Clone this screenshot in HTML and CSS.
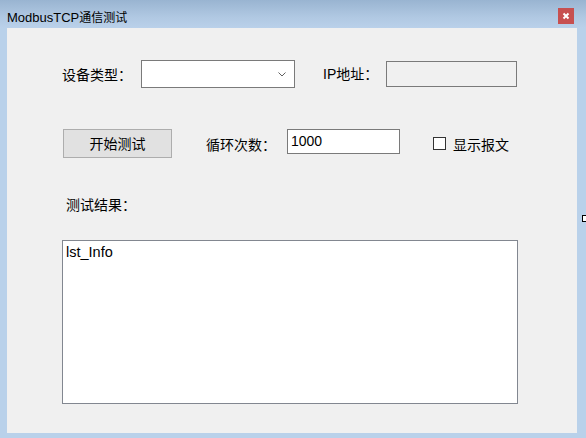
FILE: index.html
```html
<!DOCTYPE html>
<html lang="zh-CN">
<head>
<meta charset="utf-8">
<title>ModbusTCP通信测试</title>
<link rel="stylesheet" href="styles.css">
</head>
<body>
<div class="window">
  <div class="titlebar">
    <span class="title">ModbusTCP<span class="title-cjk">通信测试</span></span>
    <div class="close">
      <svg width="16" height="16" viewBox="0 0 16 16"><path d="M5.5 5.5 L10.5 10.5 M10.5 5.5 L5.5 10.5" stroke="#fff" stroke-width="2" fill="none"/></svg>
    </div>
  </div>
  <div class="frame">
    <div class="client">
      <div class="row row1">
        <span class="label label-type">设备类型：</span>
        <div class="combo">
          <svg class="chev" width="8" height="5" viewBox="0 0 8 5"><path d="M0.5 0.5 L4 4 L7.5 0.5" stroke="#606060" stroke-width="1" fill="none"/></svg>
        </div>
        <span class="label label-ip">IP地址：</span>
        <div class="textbox ipbox"></div>
      </div>
      <div class="row row2">
        <div class="button">开始测试</div>
        <span class="label label-loop">循环次数：</span>
        <div class="textbox loopbox">1000</div>
        <div class="check"></div>
        <span class="label check-label">显示报文</span>
      </div>
      <div class="label result-label">测试结果：</div>
      <div class="listbox">lst_Info</div>
    </div>
  </div>
  <div class="edge-mark"></div>
</div>
</body>
</html>
```
FILE: styles.css
```css
html, body {
  margin: 0;
  padding: 0;
}
body {
  width: 586px;
  height: 438px;
  overflow: hidden;
  font-family: "Noto Sans CJK SC", "Liberation Sans", sans-serif;
  color: #000;
}
.window {
  position: relative;
  width: 586px;
  height: 438px;
  display: flex;
  flex-direction: column;
  background: #b9d1ea;
}
.titlebar {
  height: 28px;
  flex: none;
  display: flex;
  align-items: flex-start;
  background: linear-gradient(to bottom, #99b4d1 0%, #b0c8e2 60%, #bad1ea 100%);
}
.title {
  margin-left: 7px;
  padding-top: 8px;
  font-family: "Liberation Sans", "Noto Sans CJK SC", sans-serif;
  font-size: 13px;
  line-height: 17px;
  color: #000;
}
.title-cjk {
  font-family: "Noto Sans CJK SC", sans-serif;
  font-size: 12px;
}
.close {
  margin-left: auto;
  margin-top: 8px;
  margin-right: 12px;
  width: 16px;
  height: 16px;
  background: #c75050;
}
.close svg { display: block; }
.frame {
  flex: 1;
  padding: 0 9px 5px 7px;
  display: flex;
}
.client {
  flex: 1;
  background: #f0f0f0;
  padding-left: 55px;
  display: flex;
  flex-direction: column;
  align-items: flex-start;
}
.row {
  display: flex;
  align-items: center;
}
.row1 {
  margin-top: 32px;
  height: 28px;
}
.label {
  font-size: 14px;
  line-height: 20px;
  white-space: nowrap;
}
.label-type { width: 79px; }
.combo {
  box-sizing: border-box;
  width: 154px;
  height: 28px;
  border: 1px solid #7a7a7a;
  background: #fff;
  position: relative;
  display: flex;
  align-items: center;
  justify-content: flex-end;
  padding-right: 8px;
}
.chev { display: block; }
.label-ip {
  margin-left: 28px;
  width: 63px;
  font-family: "Liberation Sans", "Noto Sans CJK SC", sans-serif;
}
.textbox {
  box-sizing: border-box;
  border: 1px solid #7a7a7a;
}
.ipbox {
  width: 131px;
  height: 26px;
  background: #f0f0f0;
}
.row2 {
  margin-top: 41px;
  height: 29px;
}
.button {
  box-sizing: border-box;
  margin-left: 1px;
  width: 109px;
  height: 29px;
  background: #e1e1e1;
  border: 1px solid #adadad;
  font-size: 14px;
  line-height: 27px;
  text-align: center;
}
.label-loop {
  margin-left: 34px;
  width: 81px;
}
.loopbox {
  align-self: flex-start;
  width: 113px;
  height: 25px;
  background: #fff;
  font-family: "Liberation Sans", sans-serif;
  font-size: 14px;
  line-height: 23px;
  padding-left: 3px;
}
.check {
  box-sizing: border-box;
  margin-left: 33px;
  width: 13px;
  height: 13px;
  border: 1px solid #333;
  background: #fff;
}
.check-label {
  margin-left: 7px;
}
.result-label {
  margin-top: 36px;
  margin-left: 4px;
}
.listbox {
  box-sizing: border-box;
  margin-top: 26px;
  width: 456px;
  height: 164px;
  background: #fff;
  border: 1px solid #828790;
  font-family: "Liberation Sans", sans-serif;
  font-size: 14.5px;
  line-height: 17px;
  padding: 3px 3px;
}
.edge-mark {
  position: absolute;
  left: 582px;
  top: 215px;
  width: 4px;
  height: 7px;
  box-sizing: border-box;
  border: 1px solid #000;
  border-right: none;
  background: #fff;
}
```
